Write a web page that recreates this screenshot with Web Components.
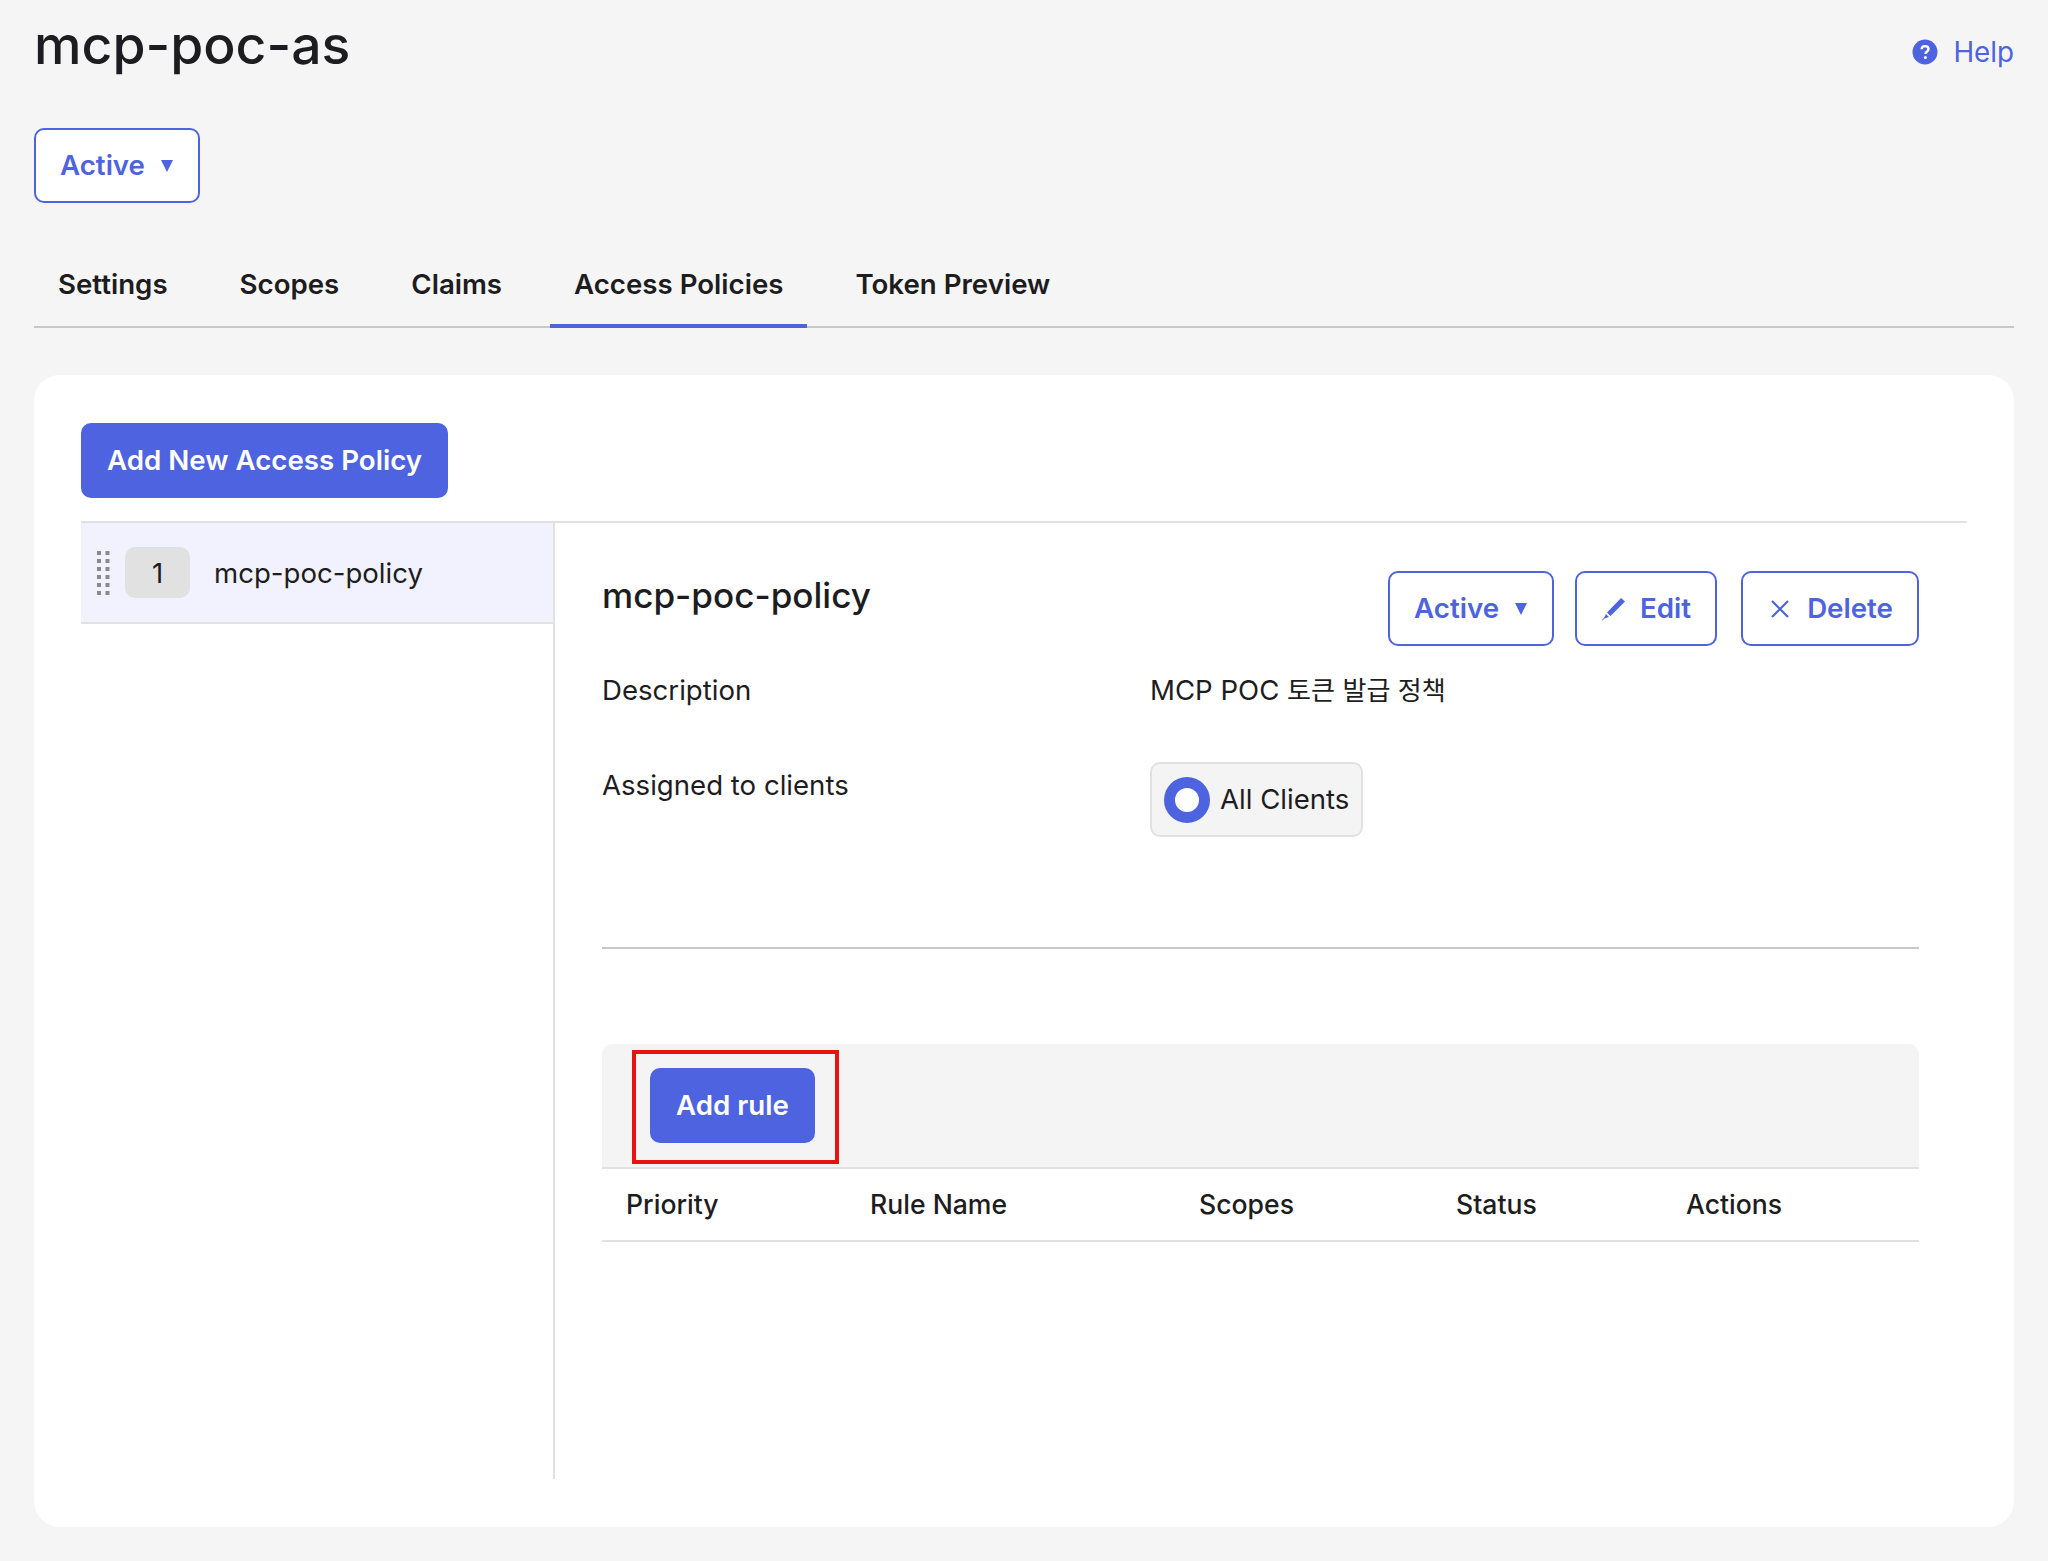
<!DOCTYPE html>
<html>
<head>
<meta charset="utf-8">
<title>mcp-poc-as</title>
<style>
	html, body { margin: 0; background: #f5f5f5; }
	body {
		font-family: Inter, "Noto Sans CJK KR", sans-serif;
		color: #1d1d21;
		-webkit-font-smoothing: antialiased;
	}
</style>
</head>
<body>
<as-page></as-page>

<script>
const BLUE = '#4e63e0';

class UiButton extends HTMLElement {
	constructor() {
		super();
		this.root = this.attachShadow({mode: 'open'});
		this.root.innerHTML = `
			<style>
				:host { display: inline-flex; }
				button {
					box-sizing: border-box;
					height: 75px;
					display: inline-flex;
					align-items: center;
					padding: 0 24px;
					gap: 10px;
					font: 600 27.7px/1 Inter, sans-serif;
					border-radius: 10px;
					border: 2px solid ${BLUE};
					background: #fff;
					color: ${BLUE};
				}
				:host([primary]) button {
					background: ${BLUE};
					color: #fff;
				}
				::slotted(svg) { flex: none; display: block; }
			</style>
			<button><slot></slot></button>
		`;
	}
}
customElements.define('ui-button', UiButton);

class StatusButton extends HTMLElement {
	constructor() {
		super();
		this.root = this.attachShadow({mode: 'open'});
		this.root.innerHTML = `
			<style>
				:host { display: inline-flex; }
			</style>
			<ui-button>Active
				<svg width="14" height="14" viewBox="0 0 14 14" fill="${BLUE}" style="margin-left:5px"><path d="M1 1h12L7 13z"/></svg>
			</ui-button>
		`;
	}
}
customElements.define('status-button', StatusButton);

class AppHeader extends HTMLElement {
	constructor() {
		super();
		this.root = this.attachShadow({mode: 'open'});
		this.root.innerHTML = `
			<style>
				:host { display: block; }
				.top { display: flex; justify-content: space-between; align-items: flex-start; }
				h1 { margin: 0; font: 500 53.5px/62px Inter, sans-serif; color: #1d1d21; padding-top: 14px; }
				a {
					display: flex; align-items: center; gap: 15px;
					margin-top: 36px;
					font: 400 27.8px/32px Inter, sans-serif;
					color: ${BLUE};
				}
				.status { margin-top: 52px; }
			</style>
			<div class="top">
				<h1>mcp-poc-as</h1>
				<a>
					<svg width="26" height="26" viewBox="0 0 26 26">
						<circle cx="13" cy="13" r="12.500" fill="${BLUE}"/>
						<path d="M9.600 10.200c.1-2 1.500-3.100 3.500-3.100 2 0 3.400 1.100 3.400 2.900 0 1.300-.7 2-1.700 2.700-.9.600-1.200 1-1.200 1.900v.3" fill="none" stroke="#fff" stroke-width="2.400"/>
						<circle cx="13.400" cy="18.600" r="1.500" fill="#fff"/>
					</svg>
					Help
				</a>
			</div>
			<div class="status"><status-button></status-button></div>
		`;
	}
}
customElements.define('app-header', AppHeader);

class TabBar extends HTMLElement {
	constructor() {
		super();
		this.root = this.attachShadow({mode: 'open'});
		const tabs = ['Settings', 'Scopes', 'Claims', 'Access Policies', 'Token Preview'];
		this.root.innerHTML = `
			<style>
				:host { display: flex; border-bottom: 2px solid #c8c8c8; gap: 24px; height: 87px; box-sizing: content-box; }
				div {
					padding: 0 24px;
					font: 600 27.65px/91px Inter, sans-serif;
					color: #1d1d21;
					box-sizing: border-box;
					height: 89px;
					margin-bottom: -2px;
				}
				.on { border-bottom: 4px solid ${BLUE}; }
			</style>
			${tabs.map(t => `<div class="${t === 'Access Policies' ? 'on' : ''}">${t}</div>`).join('')}
		`;
	}
}
customElements.define('tab-bar', TabBar);

class PolicyItem extends HTMLElement {
	constructor() {
		super();
		this.root = this.attachShadow({mode: 'open'});
		this.root.innerHTML = `
			<style>
				:host {
					display: flex; align-items: center;
					height: 99px;
					background: #f1f2fe;
					border-bottom: 2px solid #e1e1e1;
					padding-left: 16px;
				}
				.badge {
					width: 65px; height: 51px;
					margin-left: 15px; margin-right: 24px;
					border-radius: 10px;
					background: #e1e1e1;
					display: flex; align-items: center; justify-content: center;
					font: 400 27.6px/1 Inter, sans-serif;
					padding-top: 2px;
					box-sizing: border-box;
				}
				span { font: 400 27.6px/1 Inter, sans-serif; color: #1d1d21; padding-top: 2px; }
			</style>
			<svg width="13" height="44" viewBox="0 0 13 44" fill="#8a8a92">
				${[0, 8, 16, 24, 32, 40].map(y => `<rect x="0" y="${y}" width="4" height="4"/><rect x="8.500" y="${y}" width="4" height="4"/>`).join('')}
			</svg>
			<div class="badge">1</div>
			<span><slot></slot></span>
		`;
	}
}
customElements.define('policy-item', PolicyItem);

class ClientChip extends HTMLElement {
	constructor() {
		super();
		this.root = this.attachShadow({mode: 'open'});
		this.root.innerHTML = `
			<style>
				:host {
					display: inline-flex; align-items: center;
					box-sizing: border-box;
					height: 75px;
					padding: 0 12px;
					gap: 10px;
					background: #f4f4f4;
					border: 2px solid #e1e1e1;
					border-radius: 10px;
					font: 400 27.6px/1 Inter, sans-serif;
				}
				i { box-sizing: border-box; width: 46px; height: 46px; border-radius: 50%; border: 11px solid ${BLUE}; background: #fff; }
			</style>
			<i></i><slot></slot>
		`;
	}
}
customElements.define('client-chip', ClientChip);

class RulesTable extends HTMLElement {
	constructor() {
		super();
		this.root = this.attachShadow({mode: 'open'});
		const cols = ['Priority', 'Rule Name', 'Scopes', 'Status', 'Actions'];
		this.root.innerHTML = `
			<style>
				:host { display: block; }
				.bar {
					position: relative;
					box-sizing: border-box;
					height: 125px;
					padding: 24px 48px;
					background: #f4f4f4;
					border-bottom: 2px solid #e1e1e1;
					border-radius: 10px 10px 0 0;
				}
				.mark {
					position: absolute;
					left: 30px; top: 6px;
					width: 207px; height: 114px;
					box-sizing: border-box;
					border: 4px solid #e8130f;
				}
				.head {
					display: grid;
					grid-template-columns: 244px 329px 257px 230px 1fr;
					box-sizing: border-box;
					height: 73px;
					align-items: center;
					padding-left: 24px;
					border-bottom: 2px solid #e1e1e1;
					font: 500 26.6px/1 Inter, sans-serif;
				}
			</style>
			<div class="bar">
				<ui-button primary>Add rule</ui-button>
				<div class="mark"></div>
			</div>
			<div class="head">${cols.map(c => `<div>${c}</div>`).join('')}</div>
		`;
	}
}
customElements.define('rules-table', RulesTable);

class PolicyDetail extends HTMLElement {
	constructor() {
		super();
		this.root = this.attachShadow({mode: 'open'});
		this.root.innerHTML = `
			<style>
				:host { display: block; padding: 48px 48px 48px 47px; flex: 1; min-width: 0; }
				.top { display: flex; justify-content: space-between; align-items: flex-start; }
				h2 { margin: 2px 0 0; font: 500 35.1px/44px Inter, sans-serif; color: #1d1d21; }
				.actions { display: flex; gap: 24px; }
				.actions status-button { margin-right: -3px; }
				dl {
					display: grid;
					grid-template-columns: 548px 1fr;
					margin: 26px 0 0;
					font: 400 27.6px/36px Inter, "Noto Sans CJK KR", sans-serif;
				}
				dd, dt { margin: 0; }
				.gap { margin-bottom: 53px; }
				.low { padding-top: 5px; }
				.ko { font-size: 26.1px; }
				.rule { height: 2px; background: #c8c8c8; margin: 110px 0 95px; }
			</style>
			<div class="top">
				<h2>mcp-poc-policy</h2>
				<div class="actions">
					<status-button></status-button>
					<ui-button>
						<svg width="24" height="24" viewBox="0 0 24 24" fill="${BLUE}" style="margin:0 4px 0 1px"><path d="M19 1l4 3.500L8.500 19 5 15.500zM4 17l3 3-4.500 1.500-2 2-.5-.5 2-2z"/></svg>
						Edit
					</ui-button>
					<ui-button>
						<svg width="20" height="20" viewBox="0 0 20 20" fill="none" stroke="${BLUE}" stroke-width="2.200" style="margin:0 7px 0 3px"><path d="M2 2l16 16M18 2L2 18"/></svg>
						Delete
					</ui-button>
				</div>
			</div>
			<dl>
				<dt class="gap">Description</dt><dd class="gap">MCP POC <span class="ko">토큰 발급 정책</span></dd>
				<dt class="low">Assigned to clients</dt><dd><client-chip>All Clients</client-chip></dd>
			</dl>
			<div class="rule"></div>
			<rules-table></rules-table>
		`;
	}
}
customElements.define('policy-detail', PolicyDetail);

class PolicyCard extends HTMLElement {
	constructor() {
		super();
		this.root = this.attachShadow({mode: 'open'});
		this.root.innerHTML = `
			<style>
				:host {
					display: block;
					background: #fff;
					border-radius: 26px;
					padding: 48px 47px 47px;
					height: 1152px;
					box-sizing: border-box;
				}
				.split {
					display: flex;
					margin-top: 23px;
					border-top: 2px solid #e1e1e1;
					height: 956px;
				}
				.list { width: 472px; flex: none; border-right: 2px solid #e1e1e1; }
			</style>
			<ui-button primary>Add New Access Policy</ui-button>
			<div class="split">
				<div class="list"><policy-item>mcp-poc-policy</policy-item></div>
				<policy-detail></policy-detail>
			</div>
		`;
	}
}
customElements.define('policy-card', PolicyCard);

class AsPage extends HTMLElement {
	constructor() {
		super();
		this.root = this.attachShadow({mode: 'open'});
		this.root.innerHTML = `
			<style>
				:host { display: block; box-sizing: border-box; padding: 0 34px; height: 1561px; overflow: hidden; }
				tab-bar { margin-top: 36px; }
				policy-card { margin-top: 47px; }
			</style>
			<app-header></app-header>
			<tab-bar></tab-bar>
			<policy-card></policy-card>
		`;
	}
}
customElements.define('as-page', AsPage);
</script>
</body>
</html>
